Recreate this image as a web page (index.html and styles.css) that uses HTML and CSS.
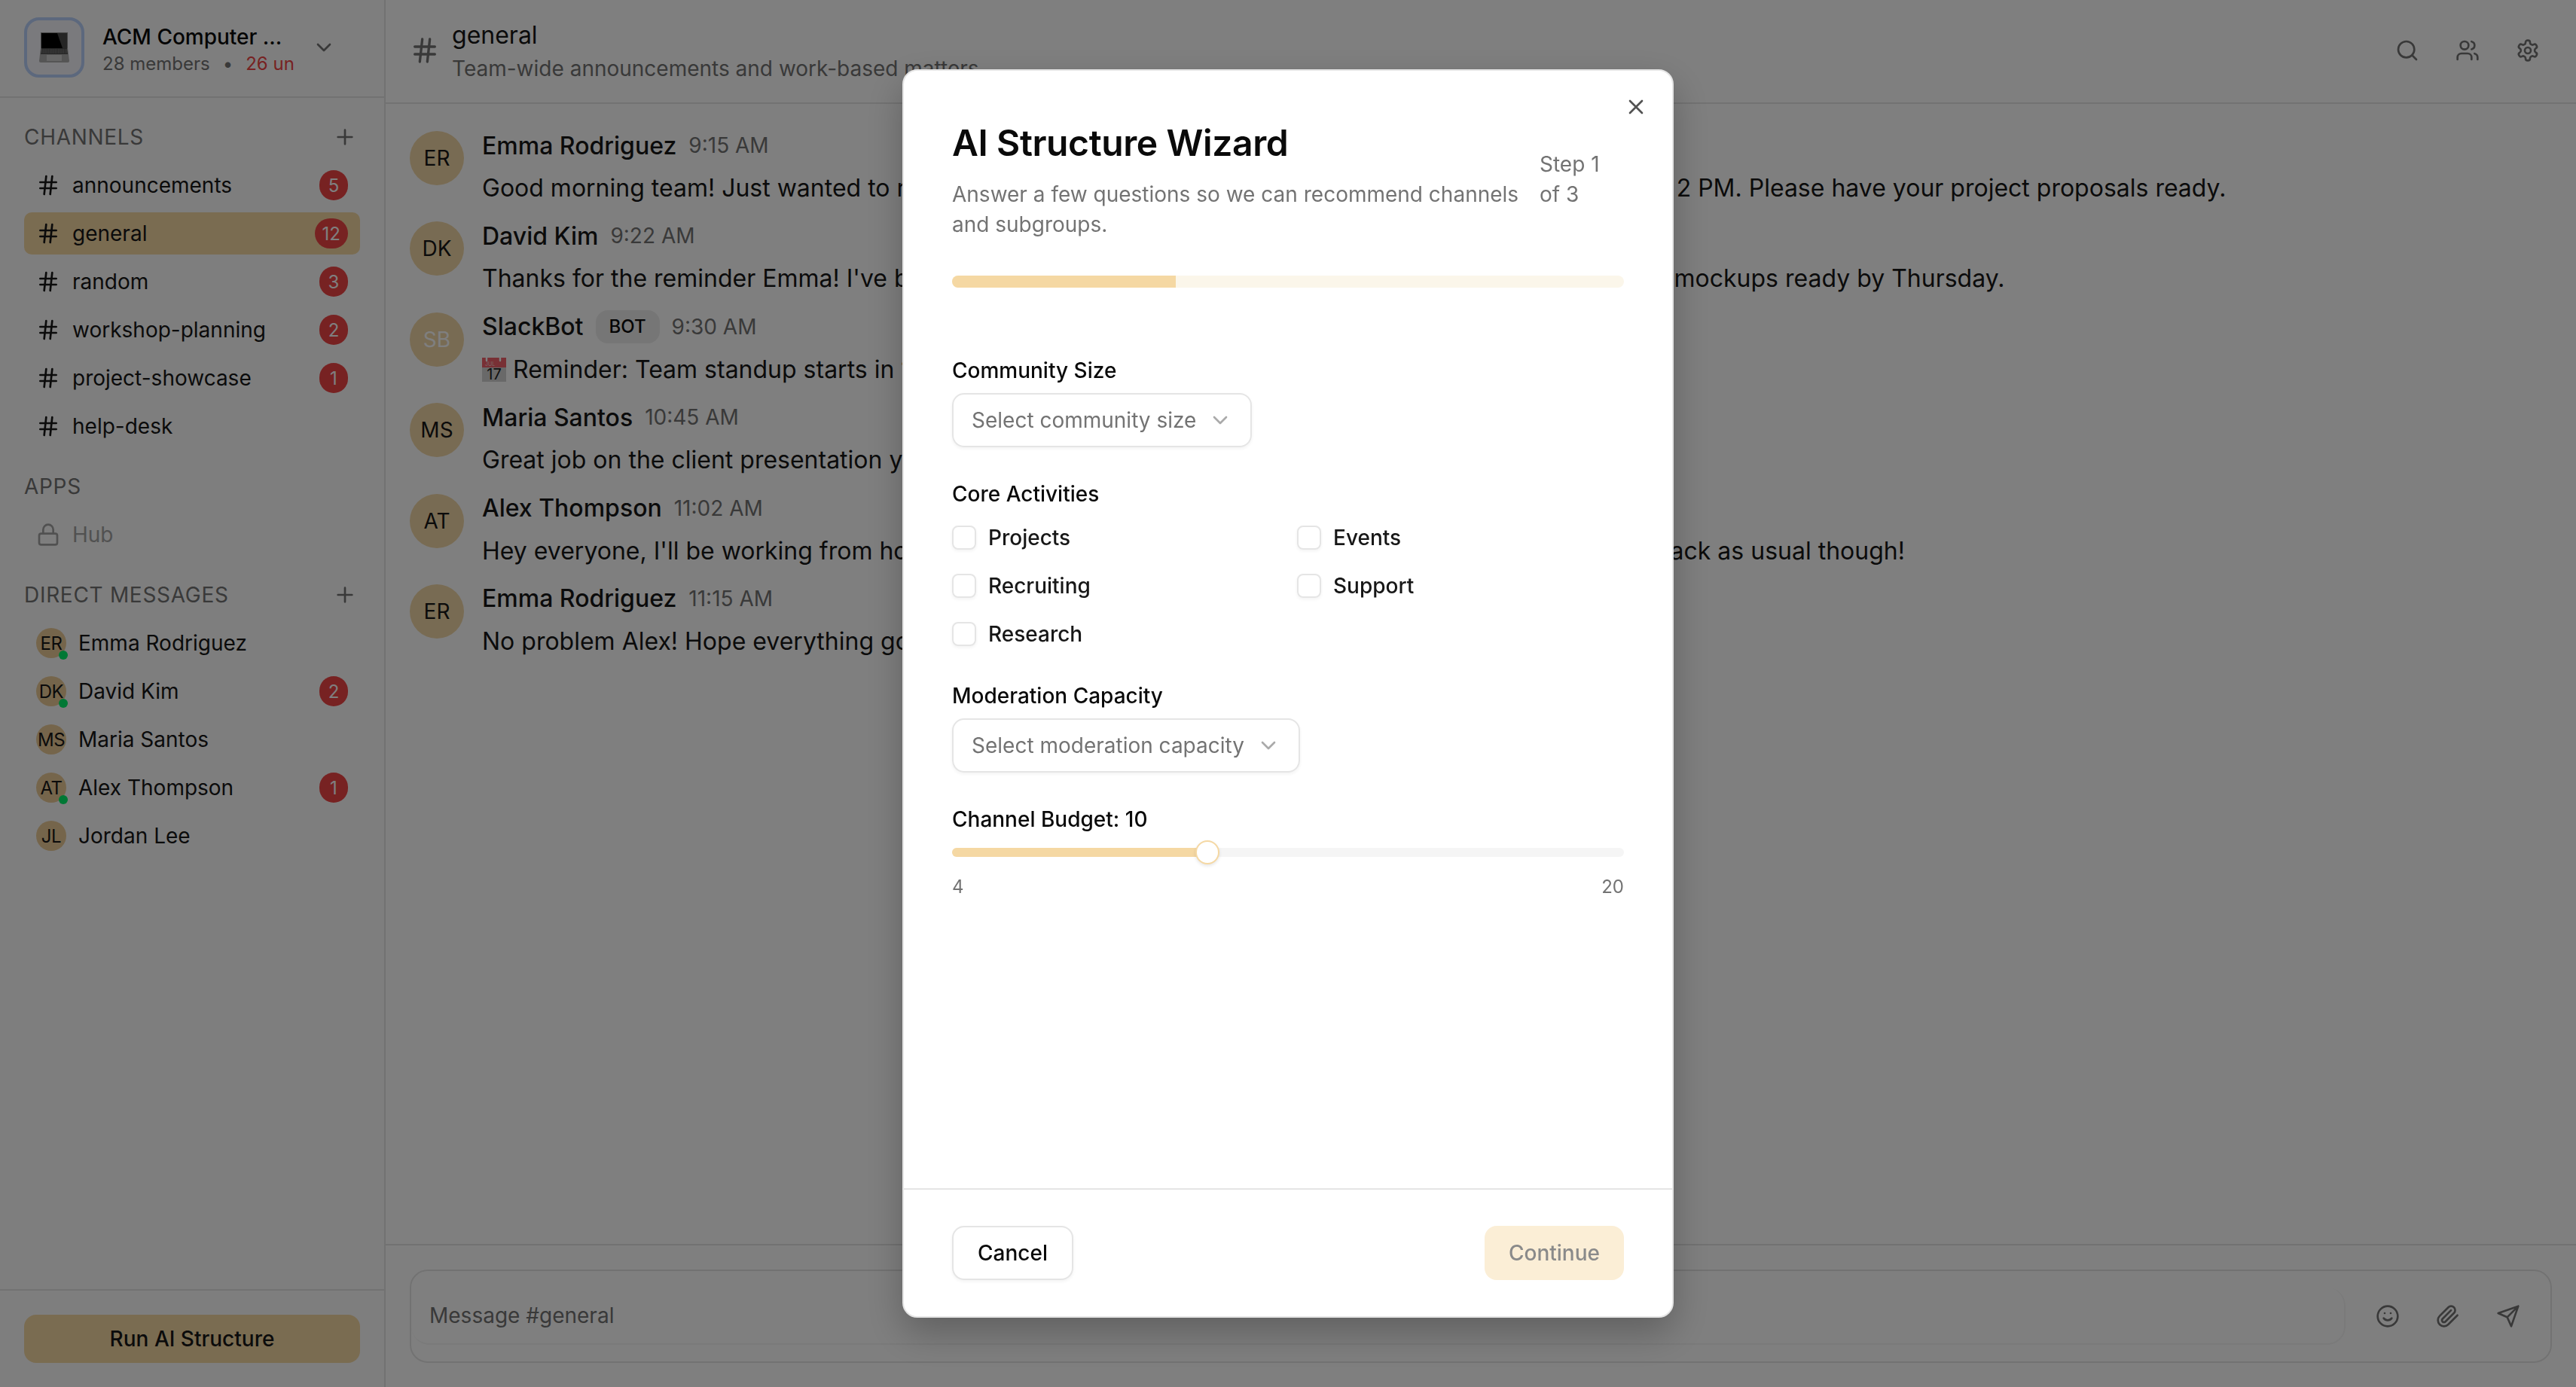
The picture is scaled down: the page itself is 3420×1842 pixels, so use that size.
FILE: index.html
```html
<!DOCTYPE html>
<html lang="en">
<head>
<meta charset="utf-8">
<title>AI Structure Wizard</title>
<link rel="stylesheet" href="styles.css">
</head>
<body>
<svg class="sprite" aria-hidden="true">
  <symbol id="i-hash" viewBox="0 0 24 24"><path d="M4 9h16M4 15h16M10 3 8 21M16 3l-2 18"/></symbol>
  <symbol id="i-plus" viewBox="0 0 24 24"><path d="M5 12h14M12 5v14"/></symbol>
  <symbol id="i-chev" viewBox="0 0 24 24"><path d="m6 9 6 6 6-6"/></symbol>
  <symbol id="i-lock" viewBox="0 0 24 24"><rect x="3" y="11" width="18" height="11" rx="2"/><path d="M7 11V7a5 5 0 0 1 10 0v4"/></symbol>
  <symbol id="i-search" viewBox="0 0 24 24"><circle cx="11" cy="11" r="8"/><path d="m21 21-4.3-4.3"/></symbol>
  <symbol id="i-users" viewBox="0 0 24 24"><path d="M16 21v-2a4 4 0 0 0-4-4H6a4 4 0 0 0-4 4v2"/><circle cx="9" cy="7" r="4"/><path d="M22 21v-2a4 4 0 0 0-3-3.87M16 3.13a4 4 0 0 1 0 7.75"/></symbol>
  <symbol id="i-gear" viewBox="0 0 24 24"><path d="M12.22 2h-.44a2 2 0 0 0-2 2v.18a2 2 0 0 1-1 1.73l-.43.25a2 2 0 0 1-2 0l-.15-.08a2 2 0 0 0-2.73.73l-.22.38a2 2 0 0 0 .73 2.73l.15.1a2 2 0 0 1 1 1.72v.51a2 2 0 0 1-1 1.74l-.15.09a2 2 0 0 0-.73 2.73l.22.38a2 2 0 0 0 2.73.73l.15-.08a2 2 0 0 1 2 0l.43.25a2 2 0 0 1 1 1.73V20a2 2 0 0 0 2 2h.44a2 2 0 0 0 2-2v-.18a2 2 0 0 1 1-1.73l.43-.25a2 2 0 0 1 2 0l.15.08a2 2 0 0 0 2.73-.73l.22-.39a2 2 0 0 0-.73-2.73l-.15-.08a2 2 0 0 1-1-1.74v-.5a2 2 0 0 1 1-1.74l.15-.09a2 2 0 0 0 .73-2.73l-.22-.38a2 2 0 0 0-2.73-.73l-.15.08a2 2 0 0 1-2 0l-.43-.25a2 2 0 0 1-1-1.73V4a2 2 0 0 0-2-2z"/><circle cx="12" cy="12" r="3"/></symbol>
  <symbol id="i-smile" viewBox="0 0 24 24"><circle cx="12" cy="12" r="10"/><path d="M8 14s1.5 2 4 2 4-2 4-2M9 9h.01M15 9h.01"/></symbol>
  <symbol id="i-clip" viewBox="0 0 24 24"><path d="m21.44 11.05-9.19 9.19a6 6 0 0 1-8.49-8.49l8.57-8.57A4 4 0 1 1 18 8.84l-8.59 8.57a2 2 0 0 1-2.83-2.83l8.49-8.48"/></symbol>
  <symbol id="i-send" viewBox="0 0 24 24"><path d="m22 2-7 20-4-9-9-4ZM22 2 11 13"/></symbol>
  <symbol id="i-x" viewBox="0 0 24 24"><path d="M18 6 6 18M6 6l12 12"/></symbol>
</svg>

<div class="app">
  <aside class="sidebar">
    <header class="side-head">
      <div class="logo">
        <svg class="laptop" viewBox="0 0 40 40" aria-hidden="true">
          <path d="M2 0h36v21H2z" fill="#8c8c8c"/>
          <path d="M3 1h34v20H3z" fill="#000"/>
          <path d="M24 1h13v20h-6z" fill="#4a4a4a"/>
          <path d="M2 21h36l2 17q0 2-2 2H2q-2 0-2-2z" fill="#aaa"/>
          <path d="M3 21h34l1 8H2z" fill="#4a4a4a"/>
          <path d="M3 23h34M3 25h34M3 27h34" stroke="#aaa" stroke-width=".8" stroke-dasharray="1.4 .8"/>
          <rect x="10" y="30" width="20" height="8" fill="#cdcdcd"/>
        </svg>
      </div>
      <div class="org">
        <div class="org-name">ACM Computer ...</div>
        <div class="org-sub"><span>28 members</span><span class="org-dot">•</span><span class="org-unread">26 unread</span></div>
      </div>
      <svg class="ic ic-32 org-chev"><use href="#i-chev"/></svg>
    </header>

    <div class="side-scroll">
      <div class="sec-head"><span>CHANNELS</span><svg class="ic ic-32"><use href="#i-plus"/></svg></div>
      <ul class="list">
        <li class="row"><svg class="ic ic-32"><use href="#i-hash"/></svg><span class="row-name">announcements</span><span class="badge">5</span></li>
        <li class="row row-active"><svg class="ic ic-32"><use href="#i-hash"/></svg><span class="row-name">general</span><span class="badge">12</span></li>
        <li class="row"><svg class="ic ic-32"><use href="#i-hash"/></svg><span class="row-name">random</span><span class="badge">3</span></li>
        <li class="row"><svg class="ic ic-32"><use href="#i-hash"/></svg><span class="row-name">workshop-planning</span><span class="badge">2</span></li>
        <li class="row"><svg class="ic ic-32"><use href="#i-hash"/></svg><span class="row-name">project-showcase</span><span class="badge">1</span></li>
        <li class="row"><svg class="ic ic-32"><use href="#i-hash"/></svg><span class="row-name">help-desk</span></li>
      </ul>

      <div class="sec-head sec-apps"><span>APPS</span></div>
      <ul class="list">
        <li class="row row-off"><svg class="ic ic-32"><use href="#i-lock"/></svg><span class="row-name">Hub</span></li>
      </ul>

      <div class="sec-head sec-dm"><span>DIRECT MESSAGES</span><svg class="ic ic-32"><use href="#i-plus"/></svg></div>
      <ul class="list">
        <li class="row"><span class="mini">ER<i class="dot"></i></span><span class="row-name">Emma Rodriguez</span></li>
        <li class="row"><span class="mini">DK<i class="dot"></i></span><span class="row-name">David Kim</span><span class="badge">2</span></li>
        <li class="row"><span class="mini">MS</span><span class="row-name">Maria Santos</span></li>
        <li class="row"><span class="mini">AT<i class="dot"></i></span><span class="row-name">Alex Thompson</span><span class="badge">1</span></li>
        <li class="row"><span class="mini">JL</span><span class="row-name">Jordan Lee</span></li>
      </ul>
    </div>

    <div class="side-foot"><button class="run">Run AI Structure</button></div>
  </aside>

  <main class="main">
    <header class="main-head">
      <svg class="ic ic-40 head-hash"><use href="#i-hash"/></svg>
      <div class="head-text">
        <div class="head-title">general</div>
        <div class="head-sub">Team-wide announcements and work-based matters</div>
      </div>
      <div class="head-tools">
        <svg class="ic ic-32"><use href="#i-search"/></svg>
        <svg class="ic ic-32"><use href="#i-users"/></svg>
        <svg class="ic ic-32"><use href="#i-gear"/></svg>
      </div>
    </header>

    <section class="feed">
      <article class="msg">
        <div class="avatar">ER</div>
        <div class="msg-body">
          <div class="msg-meta"><span class="msg-name">Emma Rodriguez</span><span class="msg-time">9:15 AM</span></div>
          <p class="msg-text">Good morning team! Just wanted to remind everyone about our quarterly all-hands meeting tomorrow at 2 PM. Please have your project proposals ready.</p>
        </div>
      </article>
      <article class="msg">
        <div class="avatar">DK</div>
        <div class="msg-body">
          <div class="msg-meta"><span class="msg-name">David Kim</span><span class="msg-time">9:22 AM</span></div>
          <p class="msg-text">Thanks for the reminder Emma! I've been working on the new design system pages and should have the mockups ready by Thursday.</p>
        </div>
      </article>
      <article class="msg">
        <div class="avatar avatar-bot">SB</div>
        <div class="msg-body">
          <div class="msg-meta"><span class="msg-name">SlackBot</span><span class="bot-tag">BOT</span><span class="msg-time">9:30 AM</span></div>
          <p class="msg-text"><svg class="cal" viewBox="0 0 32 32" aria-hidden="true"><rect width="32" height="32" fill="#d2d2d2"/><rect width="32" height="13" fill="#f0606a"/><path d="M6 0v4M24 0v4" stroke="#fff" stroke-width="2.4" stroke-linecap="round"/><text x="4" y="11" class="cal-m">JUL</text><text x="16" y="29" class="cal-d">17</text></svg>Reminder: Team standup starts in 15 minutes!</p>
        </div>
      </article>
      <article class="msg">
        <div class="avatar">MS</div>
        <div class="msg-body">
          <div class="msg-meta"><span class="msg-name">Maria Santos</span><span class="msg-time">10:45 AM</span></div>
          <p class="msg-text">Great job on the client presentation yesterday everyone!</p>
        </div>
      </article>
      <article class="msg">
        <div class="avatar">AT</div>
        <div class="msg-body">
          <div class="msg-meta"><span class="msg-name">Alex Thompson</span><span class="msg-time">11:02 AM</span></div>
          <p class="msg-text">Hey everyone, I'll be working from home tomorrow due to a small family doctor appointment, but I'll be back as usual though!</p>
        </div>
      </article>
      <article class="msg">
        <div class="avatar">ER</div>
        <div class="msg-body">
          <div class="msg-meta"><span class="msg-name">Emma Rodriguez</span><span class="msg-time">11:15 AM</span></div>
          <p class="msg-text">No problem Alex! Hope everything goes well.</p>
        </div>
      </article>
    </section>

    <footer class="composer">
      <div class="composer-box">
        <div class="composer-input">Message #general</div>
        <div class="composer-tools">
          <svg class="ic ic-32"><use href="#i-smile"/></svg>
          <svg class="ic ic-32"><use href="#i-clip"/></svg>
          <svg class="ic ic-32"><use href="#i-send"/></svg>
        </div>
      </div>
    </footer>
  </main>
</div>

<div class="overlay">
  <div class="modal" role="dialog">
    <svg class="ic ic-32 modal-x"><use href="#i-x"/></svg>
    <div class="modal-body">
      <div class="modal-head">
        <div class="modal-intro">
          <h1 class="modal-title">AI Structure Wizard</h1>
          <p class="modal-desc">Answer a few questions so we can recommend channels and subgroups.</p>
        </div>
        <div class="modal-step">Step 1 of 3</div>
      </div>
      <div class="progress"><div class="progress-fill"></div></div>

      <div class="field field-first">
        <div class="label">Community Size</div>
        <div class="select"><span>Select community size</span><svg class="ic ic-32 sel-chev"><use href="#i-chev"/></svg></div>
      </div>

      <div class="field">
        <div class="label label-tight">Core Activities</div>
        <div class="checks">
          <label class="check"><span class="box"></span>Projects</label>
          <label class="check"><span class="box"></span>Events</label>
          <label class="check"><span class="box"></span>Recruiting</label>
          <label class="check"><span class="box"></span>Support</label>
          <label class="check"><span class="box"></span>Research</label>
        </div>
      </div>

      <div class="field">
        <div class="label">Moderation Capacity</div>
        <div class="select"><span>Select moderation capacity</span><svg class="ic ic-32 sel-chev"><use href="#i-chev"/></svg></div>
      </div>

      <div class="field">
        <div class="label">Channel Budget: 10</div>
        <div class="slider"><div class="slider-fill"><span class="thumb"></span></div></div>
        <div class="slider-ends"><span>4</span><span>20</span></div>
      </div>
    </div>
    <div class="modal-foot">
      <button class="btn btn-ghost">Cancel</button>
      <button class="btn btn-primary">Continue</button>
    </div>
  </div>
</div>
</body>
</html>
```
FILE: styles.css
```css
* { box-sizing: border-box; }
html, body { margin: 0; height: 100%; }
body {
  font-family: Inter, "Noto Sans", sans-serif;
  font-size: 28px;
  color: #0a0a0a;
  background: #fff;
  overflow: hidden;
}
.sprite { display: none; }
.ic {
  fill: none;
  stroke: currentColor;
  stroke-width: 2;
  stroke-linecap: round;
  stroke-linejoin: round;
  flex: none;
}
.ic-32 { width: 32px; height: 32px; }
.ic-40 { width: 40px; height: 40px; }
ul { list-style: none; margin: 0; padding: 0; }
p, h1 { margin: 0; }
button { font: inherit; cursor: pointer; }

.app { display: flex; height: 100vh; }

/* sidebar */
.sidebar {
  width: 512px;
  flex: none;
  display: flex;
  flex-direction: column;
  background: #fcfcfc;
  border-right: 2px solid #e5e5e5;
}
.side-head {
  height: 130px;
  flex: none;
  display: flex;
  align-items: center;
  padding: 0 32px 2px;
  border-bottom: 2px solid #e5e5e5;
}
.logo {
  width: 80px;
  height: 80px;
  flex: none;
  display: flex;
  align-items: center;
  justify-content: center;
  background: #f4f4fa;
  border: 4px solid #b8d0fa;
  border-radius: 20px;
}
.laptop { width: 40px; height: 40px; }
.org { width: 255px; margin: 4px 0 0 24px; overflow: hidden; white-space: nowrap; }
.org-name { font-weight: 500; line-height: 40px; }
.org-sub { font-size: 24px; line-height: 32px; color: #737373; display: flex; }
.org-dot { margin: 0 17px; }
.org-unread { color: #ef4444; }
.org-chev { margin-left: 23px; color: #737373; }

.side-scroll { flex: 1; padding: 34px 32px 0; min-height: 0; }
.sec-head {
  display: flex;
  align-items: center;
  justify-content: space-between;
  height: 36px;
  padding-right: 4px;
  color: #737373;
  font-weight: 400;
  letter-spacing: .7px;
  margin-bottom: 18px;
}
.sec-apps { margin-top: 34px; }
.sec-dm { margin-top: 34px; }
.list { display: flex; flex-direction: column; gap: 8px; }
.row {
  height: 56px;
  display: flex;
  align-items: center;
  gap: 16px;
  padding: 0 16px;
  border-radius: 10px;
  color: #171717;
  white-space: nowrap;
}
.row .ic { color: #171717; }
.row-active { background: #f5d8a3; }
.row-off, .row-off .ic { color: #a3a3a3; }
.row-name { flex: 1; }
.badge {
  min-width: 38px;
  height: 40px;
  padding: 0 10px;
  border-radius: 20px;
  background: #ef4444;
  color: #fff;
  font-size: 24px;
  display: flex;
  align-items: center;
  justify-content: center;
}
.mini {
  position: relative;
  width: 40px;
  height: 40px;
  flex: none;
  border-radius: 50%;
  background: #ebcb97;
  font-size: 24px;
  letter-spacing: -.5px;
  display: flex;
  align-items: center;
  justify-content: center;
}
.dot {
  position: absolute;
  right: -2px;
  bottom: -2px;
  width: 12px;
  height: 12px;
  border-radius: 50%;
  background: #00f06a;
}
.side-foot {
  flex: none;
  padding: 32px;
  border-top: 2px solid #e5e5e5;
}
.run {
  display: block;
  width: 100%;
  height: 64px;
  border: 0;
  border-radius: 16px;
  background: #f5d8a3;
  color: #171717;
  font-weight: 500;
}

/* main */
.main { flex: 1; min-width: 0; display: flex; flex-direction: column; background: #fff; }
.main-head {
  height: 138px;
  flex: none;
  display: flex;
  align-items: center;
  padding: 0 48px 2px 32px;
  border-bottom: 2px solid #e5e5e5;
}
.head-hash { color: #737373; }
.head-text { margin-left: 16px; padding-top: 2px; flex: 1; white-space: nowrap; }
.head-title { font-size: 32px; line-height: 44px; margin-bottom: 2px; color: #171717; }
.head-sub { line-height: 40px; color: #737373; }
.head-tools { display: flex; gap: 48px; color: #737373; }

.feed { flex: 1; min-height: 0; padding: 32px 32px 0; display: flex; flex-direction: column; gap: 16.4px; }
.msg { display: flex; gap: 24px; }
.avatar {
  width: 72px;
  height: 72px;
  margin-top: 4px;
  flex: none;
  border-radius: 50%;
  background: #f1d6a6;
  display: flex;
  align-items: center;
  justify-content: center;
  font-size: 28px;
  color: #171717;
}
.avatar-bot { color: #fff; }
.msg-body { flex: 1; min-width: 0; }
.msg-meta { display: flex; align-items: center; gap: 16px; height: 46px; margin-bottom: 10px; white-space: nowrap; }
.msg-name { font-size: 32px; font-weight: 500; color: #171717; }
.msg-time { color: #737373; }
.bot-tag {
  height: 44px;
  padding: 0 18px;
  border-radius: 16px;
  background: #ececec;
  font-size: 24px;
  font-weight: 500;
  display: flex;
  align-items: center;
}
.msg-text { font-size: 32px; line-height: 48px; color: #171717; white-space: nowrap; }
.cal { width: 32px; height: 32px; margin-right: 9px; vertical-align: -5px; }
.cal-m { font-size: 7px; fill: #f6d0d0; }
.cal-d { font-size: 20px; text-anchor: middle; fill: #222; }

.composer { flex: none; height: 190px; padding: 32px; border-top: 2px solid #e5e5e5; }
.composer-box {
  height: 124px;
  display: flex;
  align-items: center;
  border: 2px solid #e5e5e5;
  border-radius: 24px;
}
.composer-input {
  flex: 1;
  height: 76px;
  padding: 0 24px;
  display: flex;
  align-items: center;
  color: #737373;
  border: 2px solid #f5f5f5;
  border-left: 0;
  border-top: 0;
  border-radius: 24px;
}
.composer-tools { display: flex; gap: 48px; padding: 0 40px; color: #737373; }

/* modal layer */
.overlay {
  position: fixed;
  inset: 0;
  display: flex;
  align-items: center;
  justify-content: center;
  background: rgba(0, 0, 0, .5);
}
.modal {
  position: relative;
  width: 1024px;
  height: 90vh;
  display: flex;
  flex-direction: column;
  background: #fff;
  border: 2px solid #e5e5e5;
  border-radius: 20px;
  box-shadow: 0 20px 50px rgba(0, 0, 0, .25);
  color: #0a0a0a;
}
.modal-x { position: absolute; top: 32px; right: 32px; color: #0a0a0a; opacity: .7; }
.modal-body { flex: 1; min-height: 0; padding: 64px 64px 0; }
.modal-head { display: flex; align-items: center; gap: 24px; }
.modal-intro { flex: 1; min-width: 0; }
.modal-title { font-size: 48px; font-weight: 600; letter-spacing: -.4px; line-height: 64px; margin-bottom: 16px; }
.modal-desc { line-height: 40px; color: #737373; }
.modal-step { flex: 0 0 112px; line-height: 40px; color: #737373; }
.progress { height: 16px; margin-top: 48px; border-radius: 8px; background: #fbf6ea; overflow: hidden; }
.progress-fill { width: 33.33%; height: 100%; background: #f5d8a3; }
.field { margin-top: 42px; }
.field-first { margin-top: 90px; }
.label { line-height: 40px; margin-bottom: 10px; font-weight: 500; }
.label-tight { margin-bottom: 18px; }
.select {
  display: inline-flex;
  align-items: center;
  gap: 16px;
  height: 72px;
  padding: 0 24px;
  border: 2px solid #e5e5e5;
  border-radius: 16px;
  box-shadow: 0 2px 4px rgba(0, 0, 0, .05);
  color: #737373;
  vertical-align: top;
}
.sel-chev { opacity: .6; }
.checks { display: grid; grid-template-columns: 1fr 1fr; column-gap: 24px; row-gap: 24px; }
.check { display: flex; align-items: center; gap: 16px; height: 40px; font-weight: 500; color: #171717; }
.box {
  width: 32px;
  height: 32px;
  flex: none;
  border: 2px solid #e5e5e5;
  border-radius: 8px;
  box-shadow: 0 2px 4px rgba(0, 0, 0, .05);
}
.slider { height: 12px; margin-top: 18px; border-radius: 6px; background: #f5f5f5; }
.slider-fill { position: relative; width: 38%; height: 100%; border-radius: 6px; background: #f5d8a3; }
.thumb {
  position: absolute;
  right: -16px;
  top: -10px;
  width: 32px;
  height: 32px;
  border-radius: 50%;
  background: #fff;
  border: 2px solid #f5d8a3;
  box-shadow: 0 2px 4px rgba(0, 0, 0, .1);
}
.slider-ends {
  display: flex;
  justify-content: space-between;
  margin-top: 24px;
  font-size: 24px;
  line-height: 32px;
  color: #737373;
}
.modal-foot {
  flex: none;
  display: flex;
  justify-content: space-between;
  padding: 48px 64px;
  border-top: 2px solid #e5e5e5;
}
.btn { height: 72px; padding: 0 32px; border-radius: 16px; font-weight: 500; }
.btn-ghost { background: #fff; border: 2px solid #e5e5e5; box-shadow: 0 2px 4px rgba(0, 0, 0, .05); color: #0a0a0a; }
.btn-primary { background: #fbeed6; border: 0; color: #8a8a8a; }
```
